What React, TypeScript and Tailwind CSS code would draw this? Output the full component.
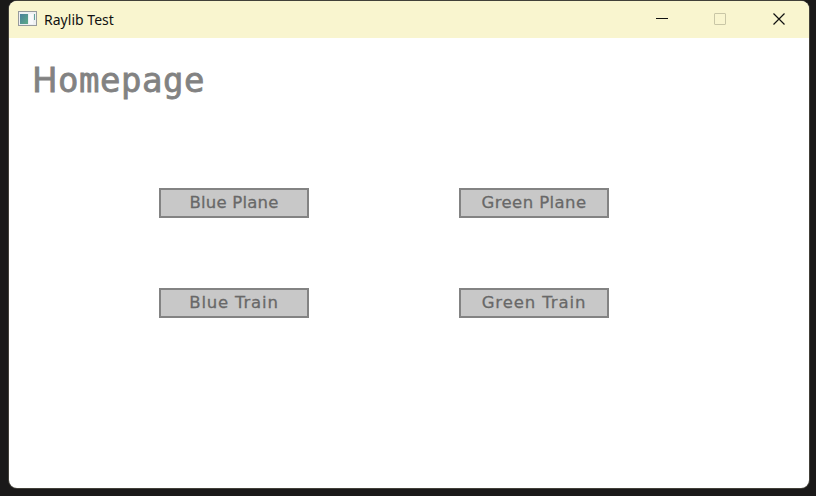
import type { ReactNode } from "react";

function AppIcon() {
  return (
    <svg width="19" height="15" viewBox="0 0 19 15" shapeRendering="crispEdges">
      <defs>
        <linearGradient id="pane" x1="0" y1="0" x2="1" y2="1">
          <stop offset="0" stopColor="#4a7f9c" />
          <stop offset="1" stopColor="#5cab86" />
        </linearGradient>
      </defs>
      <rect x="0.5" y="0.5" width="18" height="14" fill="#eef0f2" stroke="#969a9c" />
      <rect x="2" y="3" width="8" height="10" fill="url(#pane)" />
      <rect x="11" y="3" width="4" height="10" fill="#f8f9fb" />
      <rect x="16" y="3" width="1" height="6" fill="#62a49a" />
    </svg>
  );
}

function TitleBar() {
  return (
    <header className="flex h-[37px] items-center bg-[#f9f5cf] pl-[9px]">
      <div className="mt-[-2px]">
        <AppIcon />
      </div>
      <span className="ml-[7px] mt-px w-[120px] whitespace-nowrap font-['Noto_Sans',sans-serif] text-[14px] leading-5 tracking-[0.02px] text-[#111]">
        Raylib Test
      </span>
      <div className="mb-px ml-auto mr-px flex">
        <Control>
          <path d="M0 5.5H12" stroke="#111" shapeRendering="crispEdges" />
        </Control>
        <Control>
          <rect x="0.5" y="0.5" width="11" height="11" rx="0.5" stroke="#c9c6a6" />
        </Control>
        <Control>
          <path d="M0.5 0.5L11.5 11.5M11.5 0.5L0.5 11.5" stroke="#111" strokeWidth="1.2" />
        </Control>
      </div>
    </header>
  );
}

function Control({ children }: { children: ReactNode }) {
  return (
    <button className="flex w-[58.5px] justify-center" tabIndex={-1}>
      <svg width="12" height="12" viewBox="0 0 12 12" fill="none">
        {children}
      </svg>
    </button>
  );
}

function MenuButton({ label, tracking }: { label: string; tracking: string }) {
  return (
    <button
      className={`flex h-[30px] w-[150px] items-center justify-center whitespace-nowrap border-2 border-[#838383] bg-[#c8c8c8] pb-px font-['DejaVu_Sans',sans-serif] text-[16.5px] leading-5 text-[#686868] [-webkit-text-stroke:0.3px_#686868] ${tracking}`}
    >
      {label}
    </button>
  );
}

export default function App() {
  return (
    <div className="h-[496px] w-[816px] overflow-hidden bg-[#1a1919] pl-[9px] pt-px">
      <main className="h-[487px] w-[800px] overflow-hidden rounded-[8px] bg-white shadow-[0_0_0_1px_#424039]">
        <TitleBar />
        <h1 className="ml-[23px] mt-[22px] h-10 whitespace-nowrap font-['DejaVu_Sans_Mono',monospace] text-[34px] leading-10 tracking-[0.5px] text-[#828282] [-webkit-text-stroke:0.8px_#828282] first-letter:font-['DejaVu_Sans']">
          Homepage
        </h1>
        <div className="ml-[150px] mt-[88px] grid grid-cols-[150px_150px] gap-x-[150px] gap-y-[70px]">
          <MenuButton label="Blue Plane" tracking="tracking-[0.2px]" />
          <MenuButton label="Green Plane" tracking="tracking-[0.4px]" />
          <MenuButton label="Blue Train" tracking="tracking-[0.8px]" />
          <MenuButton label="Green Train" tracking="tracking-[0.9px]" />
        </div>
      </main>
    </div>
  );
}
